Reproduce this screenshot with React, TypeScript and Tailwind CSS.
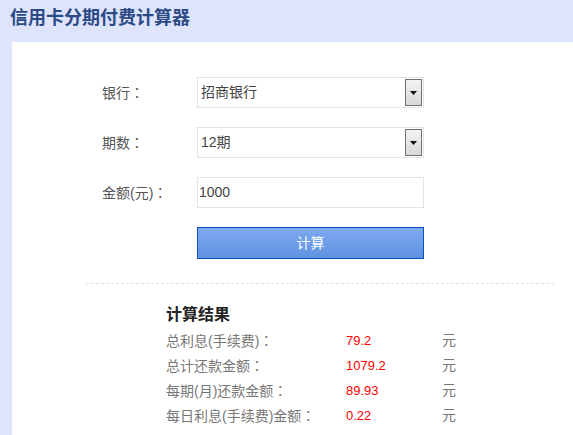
import React from 'react';

const font = { fontFamily: '"Liberation Sans", "Noto Sans CJK SC", sans-serif' };

// 冒号居中显示（SC 字形靠左）
function Colon() {
  return <span style={{ fontFamily: '"Noto Sans CJK TC", sans-serif' }}>：</span>;
}

function SelectBox({ value }: { value: string }) {
  return (
    <div className="relative flex h-[31px] w-[227px] items-center border border-[#e3e3e3] bg-white pl-[3px]">
      <span className="text-[14px] text-[#444]">{value}</span>
      <div className="absolute right-[1px] top-[1px] flex h-[27px] w-[17px] items-center justify-center border border-[#707070] bg-gradient-to-b from-[#f4f4f4] to-[#d8d8d8]">
        <svg width="7" height="4" viewBox="0 0 7 4">
          <path d="M0 0h7L3.5 4z" fill="#111" />
        </svg>
      </div>
    </div>
  );
}

export default function App() {
  const results = [
    { label: '总利息(手续费)', value: '79.2' },
    { label: '总计还款金额', value: '1079.2' },
    { label: '每期(月)还款金额', value: '89.93' },
    { label: '每日利息(手续费)金额', value: '0.22' },
  ];

  return (
    <div className="flex h-[435px] w-[573px] flex-col overflow-hidden bg-[#dde4fb]" style={font}>
      {/* Header */}
      <div className="h-[42px] pl-[10px] pt-[4px]">
        <h1 className="text-[18px] font-bold leading-[28px] text-[#2b4a86]">信用卡分期付费计算器</h1>
      </div>

      {/* Panel */}
      <div className="ml-[12px] flex-1 bg-white">
        <div className="flex flex-col gap-[19px] pl-[90px] pt-[35px]">
          <div className="flex items-center">
            <span className="w-[95px] text-[14px] text-[#555]">银行<Colon /></span>
            <SelectBox value="招商银行" />
          </div>
          <div className="flex items-center">
            <span className="w-[95px] text-[14px] text-[#555]">期数<Colon /></span>
            <SelectBox value="12期" />
          </div>
          <div className="flex items-center">
            <span className="w-[95px] text-[14px] text-[#555]">金额(元)<Colon /></span>
            <div className="flex h-[31px] w-[227px] items-center border border-[#e3e3e3] bg-white pl-[1px]">
              <span className="text-[14px] text-[#444]">1000</span>
            </div>
          </div>
          <div className="flex items-center">
            <span className="w-[95px]" />
            <button className="h-[32px] w-[227px] border border-[#0a52be] bg-gradient-to-b from-[#7eaaf0] to-[#5f92e0] text-[14px] text-white">
              计算
            </button>
          </div>
        </div>

        <div className="ml-[74px] mt-[24px] w-[468px] border-t border-dashed border-[#e2e2e2]" />

        <div className="pl-[154px] pt-[20px]">
          <h2 className="text-[16px] font-bold leading-[22px] text-[#222]">计算结果</h2>
          <div className="mt-[2px] flex flex-col">
            {results.map((r) => (
              <div key={r.label} className="flex h-[25px] items-center">
                <span className="w-[180px] text-[14px] text-[#777]">{r.label}<Colon /></span>
                <span className="w-[96px] text-[13px] text-[#ff0000]">{r.value}</span>
                <span className="text-[14px] text-[#777]">元</span>
              </div>
            ))}
          </div>
        </div>
      </div>
    </div>
  );
}
